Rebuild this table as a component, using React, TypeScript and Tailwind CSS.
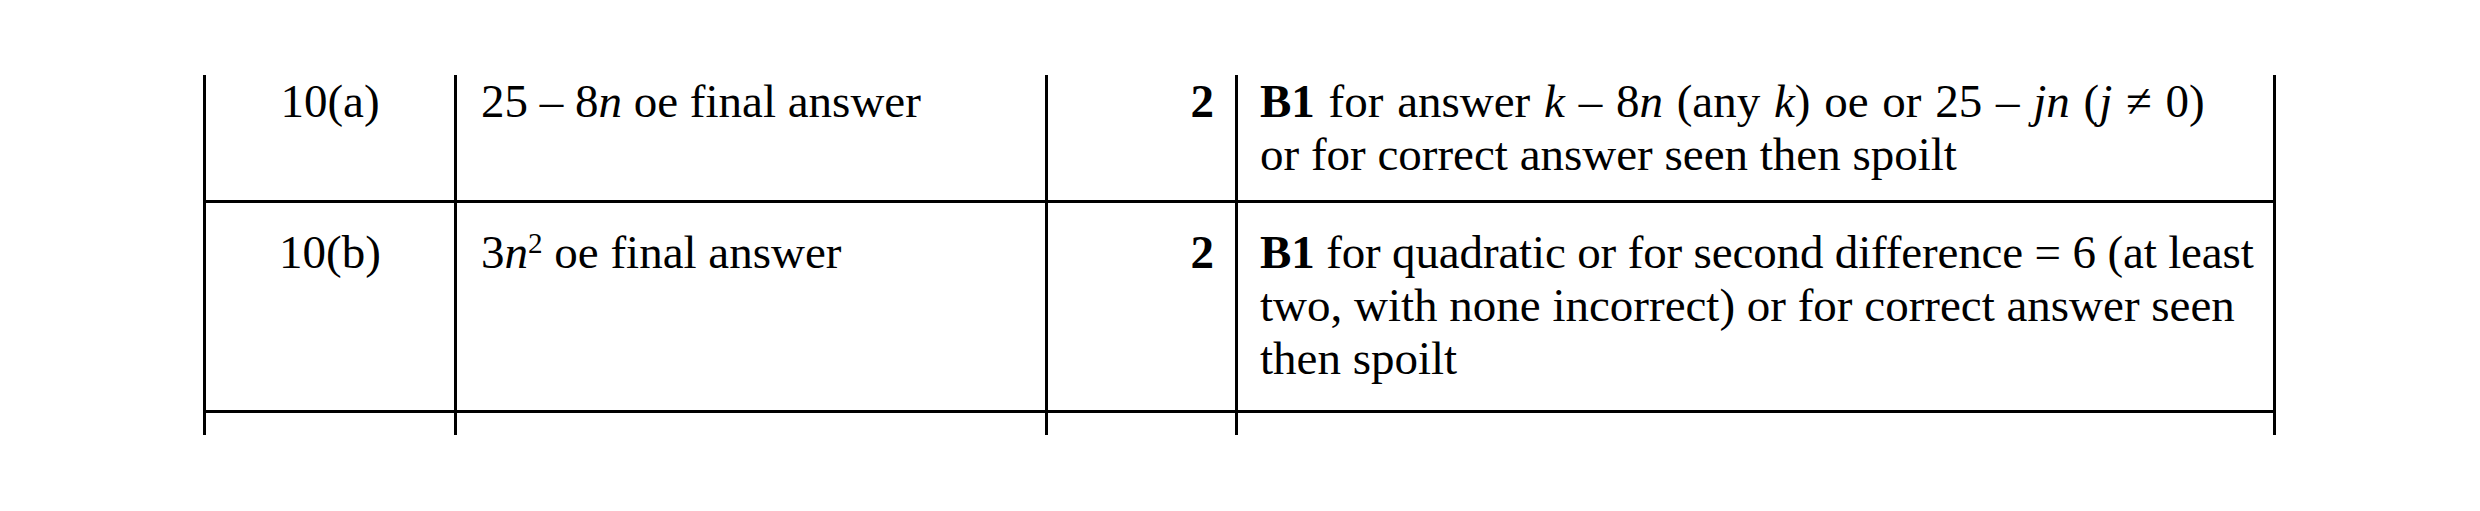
import React from 'react';

interface MarkRow {
  part: string;
  answer: React.ReactNode;
  marks: string;
  notes: React.ReactNode;
  height: string;
  pad: string;
}

const rows: MarkRow[] = [
  {
    part: '10(a)',
    answer: (
      <>
        25 – 8<i>n</i> oe final answer
      </>
    ),
    marks: '2',
    notes: (
      <>
        <span className="[word-spacing:2px]">
          <b>B1</b> for answer <i>k</i> – 8<i>n</i> (any <i>k</i>) oe or 25 – <i>jn</i> (<i>j</i> ≠ 0)
        </span>
        <br />
        or for correct answer seen then spoilt
      </>
    ),
    height: 'h-[128px]',
    pad: 'pt-0',
  },
  {
    part: '10(b)',
    answer: (
      <>
        3<i>n</i>
        <sup className="text-[62%]">2</sup> oe final answer
      </>
    ),
    marks: '2',
    notes: (
      <>
        <span className="tracking-[-0.15px]">
          <b>B1</b> for quadratic or for second difference = 6 (at least
        </span>
        <br />
        two, with none incorrect) or for correct answer seen
        <br />
        then spoilt
      </>
    ),
    height: 'h-[210px]',
    pad: 'pt-[23px]',
  },
];

export default function App() {
  return (
    <div
      className="w-[2480px] h-[511px] bg-white text-black pt-[75px] pl-[203px]"
      style={{ fontFamily: '"Liberation Serif", "Times New Roman", serif' }}
    >
      <div className="flex flex-col w-[2073px] text-[47px] leading-[53px]">
        {rows.map((row) => (
          <div key={row.part} className={`flex ${row.height} border-b-[3px] border-black`}>
            <div className={`w-[251px] shrink-0 border-l-[3px] border-black text-center ${row.pad}`}>
              {row.part}
            </div>
            <div className={`w-[591px] shrink-0 border-l-[3px] border-black pl-[24px] whitespace-nowrap ${row.pad}`}>
              {row.answer}
            </div>
            <div className={`w-[190px] shrink-0 border-l-[3px] border-black text-right pr-[21px] font-bold ${row.pad}`}>
              {row.marks}
            </div>
            <div className={`w-[1041px] shrink-0 border-x-[3px] border-black pl-[22px] whitespace-nowrap ${row.pad}`}>
              {row.notes}
            </div>
          </div>
        ))}

        {/* start of next row, cut off */}
        <div className="flex h-[22px]">
          <div className="w-[251px] shrink-0 border-l-[3px] border-black" />
          <div className="w-[591px] shrink-0 border-l-[3px] border-black" />
          <div className="w-[190px] shrink-0 border-l-[3px] border-black" />
          <div className="w-[1041px] shrink-0 border-x-[3px] border-black" />
        </div>
      </div>
    </div>
  );
}
